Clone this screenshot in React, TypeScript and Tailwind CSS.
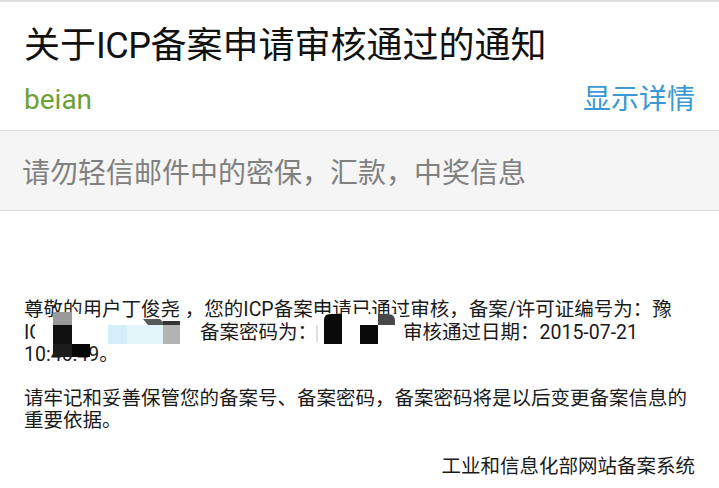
import React from 'react';

const CJK = "font-['Roboto','Noto_Sans_CJK_SC',sans-serif]";

// 打码区域（覆盖在正文上）
const Mosaic: React.FC = () => (
  <svg className="absolute left-0 top-0 pointer-events-none" width="671" height="80" viewBox="0 0 671 80">
    {/* first block */}
    <rect x="11" y="23" width="160" height="24" fill="#ffffff" />
    <rect x="36" y="15" width="36" height="9" fill="#ffffff" />
    <rect x="29" y="13" width="19" height="13" fill="#9a9a9a" />
    <rect x="29" y="26" width="19" height="19" fill="#111111" />
    <rect x="29" y="45" width="19" height="13" fill="#1c1c1c" />
    <rect x="48" y="45" width="18" height="13" fill="#050505" />
    <rect x="84" y="26" width="19" height="19" fill="#d4eefa" />
    <rect x="103" y="26" width="36" height="19" fill="#e2f6fa" />
    <rect x="139" y="26" width="17" height="19" fill="#b3b3b3" />
    <path d="M119 20 L136 20 L139 23 L139 26 L124 26 Z" fill="#5a5a5a" />
    <rect x="139" y="22" width="17" height="4" fill="#333333" />
    {/* second block */}
    <rect x="290" y="15" width="86" height="32" fill="#ffffff" />
    <rect x="292" y="26" width="2" height="17" fill="#e0e0e0" />
    <path d="M306 15 L318 15 L318 45 L300 45 L300 21 Q300 15 306 15 Z" fill="#0a0a0a" />
    <rect x="336" y="26" width="18" height="19" fill="#0a0a0a" />
    <path d="M354 15 L364 15 Q371 15 371 22 L371 26 L354 26 Z" fill="#484848" />
  </svg>
);

const App: React.FC = () => {
  return (
    <div className={`w-[719px] h-[488px] bg-white overflow-hidden border-t-2 border-[#dedede] ${CJK}`}>
      <div className="px-6 pt-5">
        <h1 className="text-[36px] leading-[48px] text-[#111] whitespace-nowrap">
          关于<span className="tracking-[-0.5px]">ICP</span>备案申请审核通过的通知
        </h1>
        <div className="mt-3 flex items-center justify-between leading-[36px]">
          <span className="text-[28px] text-[#6ea035]">beian</span>
          <span className="text-[28px] text-[#3b98d4]">显示详情</span>
        </div>
      </div>

      <div className="mt-3 h-[81px] bg-[#f5f5f5] border-y border-[#dcdcdc] flex items-center px-[22px] pt-[6px]">
        <p className="text-[28px] text-[#808080] leading-[36px]">请勿轻信邮件中的密保，汇款，中奖信息</p>
      </div>

      <div className="px-6 pt-[88px] text-[19.5px] text-[#1a1a1a]">
        <div className="relative leading-[22.5px]">
          <p>
            尊敬的用户丁俊尧 ，您的ICP备案申请已通过审核，备案/许可证编号为：豫
            <br />
            IC<span className="inline-block w-[158px]" />备案密码为：<span className="inline-block w-[86px]" />审核通过日期：2015-07-21
            <br />
            10:46:49。
          </p>
          <Mosaic />
          <p className="mt-[21px]">
            请牢记和妥善保管您的备案号、备案密码，备案密码将是以后变更备案信息的重要依据。
          </p>
        </div>
        <p className="mt-[23px] text-right leading-[22.5px]">工业和信息化部网站备案系统</p>
      </div>
    </div>
  );
};

export default App;
